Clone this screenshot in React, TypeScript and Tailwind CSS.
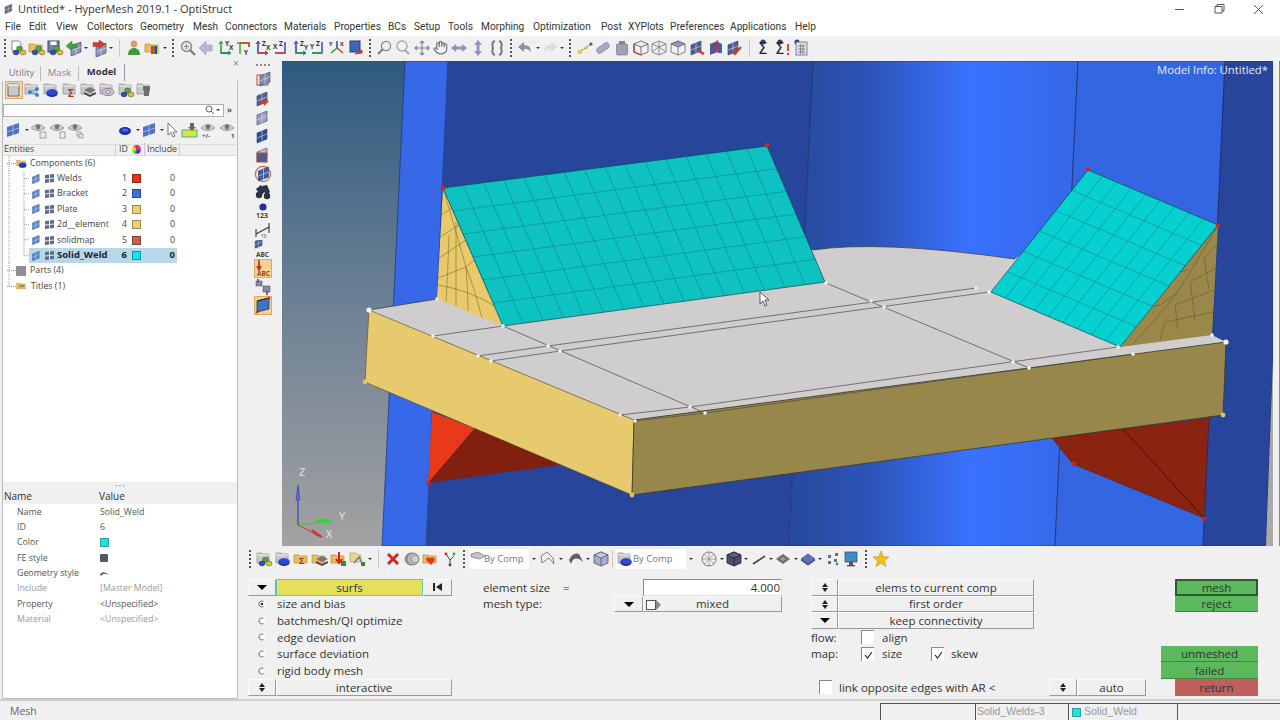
import type { ReactNode } from 'react';
import { Hand } from 'lucide-react';

const cl = (
  <g stroke="#333" strokeWidth=".4">
    <ellipse cx="10.5" cy="9.5" rx="3" ry="2.4" fill="#4caf3c" />
    <ellipse cx="7" cy="13.5" rx="3" ry="2.4" fill="#2c4fc0" />
    <ellipse cx="14" cy="13.5" rx="3" ry="2.4" fill="#e0c030" />
  </g>
);

const mesh = (fill = '#3f69b8') => (
  <g>
    <path d="M3 6 L13 2 V12 L3 16Z" fill={fill} stroke="#2b3f70" strokeWidth=".6" />
    <path d="M8 4V14M3 11 L13 7" stroke="#dfe6f2" strokeWidth=".6" />
  </g>
);

const folder = (
  <g>
    <path d="M2 3h5l1 1h6v9H2z" fill="#c9c9c9" stroke="#8c8c8c" strokeWidth=".7" />
    <path d="M2 5h12" stroke="#eee" />
  </g>
);

const yfold = <path d="M1 5h5l1 1h7v7H1z" fill="#ecbc62" stroke="#b98a3a" strokeWidth=".7" />;

const disk = (c: string) => (
  <g>
    <ellipse cx="10" cy="13" rx="5.5" ry="3" fill="#1c2f9a" />
    <ellipse cx="10" cy="11.5" rx="5.5" ry="3" fill={c} stroke="#1c2f9a" strokeWidth=".5" />
  </g>
);

const eye = (
  <g>
    <path d="M1 7 Q8 0 15 7 Q8 12 1 7Z" fill="#d2d2d2" stroke="#777" strokeWidth=".7" />
    <circle cx="8" cy="6" r="2.4" fill="#777" />
  </g>
);

const ax = (v: string, h: string, a: string, b: string) => (
  <g>
    <path d="M5 3V14H14" fill="none" stroke={v} strokeWidth="1.6" />
    <path d="M5 14H14" stroke={h} strokeWidth="1.6" />
    <path d="M3 5 L5 2 L7 5M12 12 L15 14 L12 16" fill="none" stroke={v} strokeWidth="1" />
    <text x="9" y="7" fontSize="6.5" fontWeight="700" fill="#333">{a}</text>
    <text x="13" y="11" fontSize="6.5" fontWeight="700" fill="#333">{b}</text>
  </g>
);

const boxic = (top: string, side: string, line = '#666') => (
  <g stroke={line} strokeWidth=".8">
    <path d="M9 2 L16 5 V13 L9 16 L2 13 V5Z" fill={side} />
    <path d="M2 5 L9 8 L16 5 L9 2Z" fill={top} />
    <path d="M9 8V16" />
  </g>
);

const sigma = (
  <text x="3" y="15" fontSize="15" fontFamily="DejaVu Sans, sans-serif" fill="#222">Σ</text>
);

const art: Record<string, ReactNode> = {
  imp: <g><path d="M3 2h7l2 2v8H3z" fill="#fff" stroke="#8a8a8a" />{cl}</g>,
  open: <g>{yfold}{cl}</g>,
  save: <g><rect x="2" y="2" width="11" height="11" fill="#6f86a8" stroke="#445" /><rect x="4.5" y="2.5" width="6" height="3.5" fill="#fff" />{cl}</g>,
  meshin: <g><g transform="translate(3 1)">{mesh('#8b95b5')}</g><path d="M1 7 L7 2 V5 H12 V9 H7 V12Z" fill="#3fa535" stroke="#2b7a25" strokeWidth=".4" /></g>,
  meshout: <g><g transform="translate(3 2)">{mesh('#8b95b5')}</g><path d="M15 5 L9 1 V3.5 H3 V7.5 H9 V10Z" fill="#d63a26" stroke="#9b2415" strokeWidth=".4" /></g>,
  person: <g><circle cx="9" cy="5" r="3.4" fill="#d8a070" /><path d="M3 16c0-5 3-7 6-7s6 2 6 7z" fill="#3f9a3f" /></g>,
  folderc: <g>{yfold}<rect x="7" y="7" width="2" height="8" fill="#d33" /><rect x="9" y="7" width="2" height="8" fill="#3a3" /><rect x="11" y="7" width="2" height="8" fill="#33c" /><rect x="13" y="7" width="2" height="8" fill="#ec3" /></g>,
  zoomf: <g><circle cx="7.5" cy="7.5" r="5" fill="#e6e6e6" stroke="#8a8a8a" strokeWidth="1.4" /><path d="M11 11 L16 16" stroke="#777" strokeWidth="2.2" /><path d="M5 7.5h5M7.5 5v5" stroke="#777" strokeWidth=".8" /></g>,
  left: <path d="M2 9 L9 2 V6 H15 V12 H9 V16Z" fill="#b9b7dd" stroke="#9a98c4" strokeWidth=".6" />,
  ax1: ax('#35a035', '#1c7f7f', 'Y', 'X'),
  ax2: <g><path d="M5 4V15M2 4H14V8" fill="none" stroke="#35a035" strokeWidth="1.4" /><path d="M5 4H14V8" fill="none" stroke="#d8402c" strokeWidth="1.4" /><text x="9" y="16" fontSize="6.5" fontWeight="700" fill="#333">Y</text></g>,
  ax3: ax('#2c4fc0', '#d8402c', 'Z', 'X'),
  ax4: <g><path d="M3 14H13V3" fill="none" stroke="#2c4fc0" strokeWidth="1.5" /><path d="M3 14H13" stroke="#d8402c" strokeWidth="1.5" /><text x="1" y="10" fontSize="6.5" fontWeight="700" fill="#333">X</text><text x="7" y="7" fontSize="6.5" fontWeight="700" fill="#333">Z</text></g>,
  ax5: ax('#2c4fc0', '#35a035', 'Z', 'Y'),
  ax6: <g><path d="M3 14H13V3" fill="none" stroke="#2c4fc0" strokeWidth="1.5" /><path d="M3 14H13" stroke="#35a035" strokeWidth="1.5" /><text x="1" y="10" fontSize="6.5" fontWeight="700" fill="#333">Y</text><text x="7" y="7" fontSize="6.5" fontWeight="700" fill="#333">Z</text></g>,
  axiso: <g><path d="M9 9V2" stroke="#2c4fc0" strokeWidth="1.6" /><path d="M9 9 L3 14" stroke="#35a035" strokeWidth="1.6" /><path d="M9 9 L15 14" stroke="#d8402c" strokeWidth="1.6" /><text x="1" y="7" fontSize="5.5" fontWeight="700" fill="#333">Y</text><text x="12" y="7" fontSize="5.5" fontWeight="700" fill="#333">X</text></g>,
  view: <g><rect x="3" y="2" width="10" height="11" fill="#3f69b8" stroke="#2b3f70" /><path d="M8 15 L15 11 V14Z" fill="#d63a26" stroke="#d63a26" /></g>,
  zoomp: <g><circle cx="10" cy="7" r="4.6" fill="#eee" stroke="#8a8a8a" strokeWidth="1.3" /><path d="M7 10 L2 15" stroke="#777" strokeWidth="2" /></g>,
  zoomq: <g><circle cx="8" cy="7" r="5" fill="#f2f2f2" stroke="#a6a6a6" strokeWidth="1.3" /><path d="M11 11 L15 15" stroke="#aaa" strokeWidth="2" /></g>,
  pan: <path d="M9 2V16M2 9H16M7 4 L9 2 L11 4M7 14 L9 16 L11 14M4 7 L2 9 L4 11M14 7 L16 9 L14 11" fill="none" stroke="#7c7f96" strokeWidth="1.1" />,
  lr: <path d="M1 9 L6 5 V7.5 H12 V5 L17 9 L12 13 V10.5 H6 V13Z" fill="#9593c0" />,
  ud: <path d="M9 1 L13 6 H10.5 V12 H13 L9 17 L5 12 H7.5 V6 H5Z" fill="#9593c0" />,
  brace: <path d="M7 2 Q3 3 5 9 Q3 15 7 16M11 2 Q15 3 13 9 Q15 15 11 16" fill="none" stroke="#6f7396" strokeWidth="2" />,
  undo: <path d="M2 8 L8 3 V6 Q15 6 15 13 Q12 9 8 10 V13Z" fill="#8a8fae" />,
  redo: <path d="M16 8 L10 3 V6 Q3 6 3 13 Q6 9 10 10 V13Z" fill="#dcdcdc" />,
  line: <g><path d="M3 13 L15 5" stroke="#444" strokeWidth="1" strokeDasharray="2 1" /><circle cx="4" cy="13" r="2.2" fill="#d8d23c" /><circle cx="10" cy="9" r="1.6" fill="#d8d23c" /><circle cx="15" cy="5" r="1.6" fill="#556" /></g>,
  cyl: <g transform="rotate(-35 9 9)"><rect x="2" y="6" width="14" height="6" rx="2.5" fill="#a3a8c4" stroke="#7e83a3" strokeWidth=".6" /></g>,
  weight: <g><rect x="6" y="2" width="6" height="3" fill="#888" /><rect x="3.5" y="5" width="11" height="11" rx="1" fill="#9da2b2" stroke="#6e7282" strokeWidth=".6" /></g>,
  boxr: <g fill="none" strokeWidth=".9"><path d="M9 2 L16 5 V13 L9 16 L2 13 V5Z" stroke="#666" /><path d="M2 5 L9 8 L16 5M9 8V16" stroke="#666" /><path d="M2 5V13 L9 16" stroke="#c8302a" strokeWidth="1.2" /></g>,
  boxo: <g fill="none" stroke="#777" strokeWidth=".8"><path d="M9 2 L16 5 V13 L9 16 L2 13 V5Z" /><path d="M2 5 L9 8 L16 5M9 8V16M2 13 L9 8 L16 13M9 2V8" /></g>,
  boxf: <g>{boxic('#8d98c8', '#f2f2f2')}</g>,
  mred: <g>{mesh('#4a5c8a')}<path d="M9 11 L16 15" stroke="#d63a26" strokeWidth="2.4" /></g>,
  mblue: <g><path d="M3 5 L8 3 V14 L3 16Z" fill="#4a5c8a" /><path d="M8 3 L11 1 V13 L8 14Z" fill="#c26" /><path d="M11 3 L15 5 V14 L11 14Z" fill="#4a5c8a" /></g>,
  mcheck: <g>{mesh('#4a5c8a')}<path d="M7 12 L10 15 L16 8" fill="none" stroke="#d63a26" strokeWidth="2.2" /></g>,
  sum: <g><circle cx="8" cy="3" r="2.6" fill="#26458f" />{sigma}</g>,
  sumx: <g><circle cx="6" cy="3" r="2.6" fill="#26458f" /><text x="1" y="15" fontSize="15" fontFamily="DejaVu Sans, sans-serif" fill="#222">Σ</text><path d="M14 5V12M14 14V16" stroke="#d63a26" strokeWidth="1.8" /></g>,
  calc: <g><circle cx="5" cy="3" r="2.6" fill="#26458f" /><rect x="4" y="3" width="11" height="13" fill="#dde2e8" stroke="#667" strokeWidth=".8" /><path d="M6 7H13M6 10H13M6 13H13M8.5 5V15M11 5V15" stroke="#667" strokeWidth=".7" /></g>,
  fsel: <g><path d="M3 3H14V15H3Z" fill="#c8c8c8" stroke="#6c6c6c" /><path d="M3 3H14V5H3Z" fill="#e4e4e4" /></g>,
  fnet: <g>{folder}<g fill="#2e7fd0" stroke="#2e7fd0" strokeWidth=".7"><circle cx="7" cy="11" r="1.6" /><circle cx="14" cy="8" r="1.6" /><circle cx="14" cy="14" r="1.6" /><path d="M7 11 L14 8M7 11 L14 14" /></g></g>,
  fdisk: <g>{folder}{disk('#2e49d8')}</g>,
  fsig: <g>{folder}<text x="7" y="16" fontSize="10" fontWeight="700" fill="#a8332a">Σ</text></g>,
  fstk: <g>{folder}<path d="M5 9 L11 6 L17 9 L11 12Z" fill="#777" /><path d="M5 11 L11 14 L17 11 V13 L11 16 L5 13Z" fill="#444" /></g>,
  fring: <g>{folder}<ellipse cx="10" cy="11" rx="6" ry="3.6" fill="#d8c8d8" stroke="#8d7c9a" /><ellipse cx="10" cy="11" rx="2.6" ry="1.4" fill="#f0f0f0" stroke="#8d7c9a" /></g>,
  fcub: <g>{folder}{cl}</g>,
  fbolt: <g>{folder}<path d="M8 5H15V9L14 10V15H9V10L8 9Z" fill="#6d6d6d" /></g>,
  mdrop: <g><path d="M2 6 L8 4 V14 L2 16Z" fill="#4f72c2" /><path d="M8 4 L14 2 V12 L8 14Z" fill="#4f72c2" /><path d="M2 11 L14 7M8 4V14" stroke="#cdd8ee" strokeWidth=".6" /></g>,
  eye1: <g>{eye}<rect x="10" y="11" width="6" height="6" fill="#e6e6e6" stroke="#777" strokeWidth=".6" /></g>,
  eye2: <g>{eye}<path d="M11 11H16V17H11Z" fill="none" stroke="#777" strokeWidth=".7" /></g>,
  eye3: <g>{eye}<rect x="10" y="11" width="4" height="4" fill="none" stroke="#777" strokeWidth=".6" /><rect x="12" y="13" width="4" height="4" fill="#e6e6e6" stroke="#777" strokeWidth=".6" /></g>,
  ydisk: <g><ellipse cx="9" cy="10" rx="6" ry="4" fill="#1b2db0" /><ellipse cx="9" cy="9" rx="3" ry="1.6" fill="#4e6cf0" /></g>,
  curs: <path d="M5 2V14L8 11.5 L10 16 L12 15 L10 11 H14Z" fill="#fff" stroke="#555" strokeWidth=".8" />,
  ybox: <g><rect x="1" y="9" width="15" height="7" fill="#e6e234" stroke="#36b5ae" /><path d="M9 2H13V6H15 L11 10 L7 6H9Z" fill="#6b6b3b" /></g>,
  eyep: <g>{eye}<text x="2" y="17" fontSize="6" fontWeight="700" fill="#444">+/-</text></g>,
  eye1n: <g>{eye}<text x="12" y="17" fontSize="6" fontWeight="700" fill="#444">1</text></g>,
  vbox: <g><rect x="3" y="4" width="11" height="10" fill="#f4e8e0" stroke="#c2463a" /><g transform="translate(3 -1)">{mesh('#7f8bb0')}</g></g>,
  vred: <g>{mesh('#4f5f8a')}<path d="M15 11 L10 9 V11 H6 V14 H10 V16Z" fill="#d63a26" /></g>,
  vgh: <g>{mesh('#98a0ba')}</g>,
  vmesh: <g>{mesh('#2f4a8f')}</g>,
  vdbl: <g>{mesh('#b8b8c8')}<rect x="3" y="7" width="10" height="9" fill="#4a5c8a" stroke="#c2463a" /></g>,
  vring: <g><circle cx="9" cy="9" r="7.6" fill="#f2e8e6" stroke="#c06a60" strokeWidth="1.2" /><g transform="translate(1.5 0)">{mesh('#3f5f9e')}</g></g>,
  bino: <g fill="#2c3040"><path d="M2 6 L7 2 L11 8 L7 13Z" /><path d="M8 3 L13 2 L16 9 L12 13Z" /><circle cx="5" cy="12" r="3.2" /><circle cx="13" cy="13" r="3.2" /></g>,
  n123: <g><circle cx="9" cy="5" r="3.6" fill="#1e2f9e" /><text x="2" y="16" fontSize="7" fontWeight="700" fill="#444">123</text></g>,
  angle: <g><path d="M2 13 L15 6M2 8V16M15 2V12" stroke="#333" strokeWidth="1.1" fill="none" /><text x="7" y="17" fontSize="5" fill="#333">10</text></g>,
  vabc: <g><g transform="translate(-1 -3) scale(.7)">{mesh('#3f5f9e')}</g><text x="2" y="17" fontSize="6.5" fontWeight="700" fill="#444">ABC</text></g>,
  redabc: <g><path d="M5 1V9M3 7 L5 11 L7 7" stroke="#c5281c" strokeWidth="1.6" fill="none" /><text x="3" y="17" fontSize="6.5" fontWeight="700" fill="#8a4a2a">ABC</text></g>,
  vlink: <g><rect x="2" y="3" width="6" height="5" fill="#7f8bb0" stroke="#445" strokeWidth=".5" /><rect x="9" y="8" width="7" height="6" fill="#7f8bb0" stroke="#445" strokeWidth=".5" /><path d="M4 1V4M13 13V17" stroke="#c5281c" strokeWidth="1.6" /></g>,
  vsel: <g><path d="M3 5 L15 2 V13 L3 16Z" fill="#3f74c8" stroke="#222" strokeWidth=".7" /><path d="M3 5 L15 2" stroke="#222" /><circle cx="3" cy="16" r="1.3" fill="#b33" /><circle cx="15" cy="2" r="1.3" fill="#b33" /></g>,
  b1: <g>{folder}{cl}</g>,
  b3: <g>{folder}{disk('#2e49d8')}</g>,
  b4: <g>{yfold}<text x="6" y="14" fontSize="9" fontWeight="700" fill="#a8332a">Σ</text></g>,
  b5: <g>{yfold}<path d="M5 9 L11 6 L17 9 L11 12Z" fill="#777" /><path d="M5 11 L11 14 L17 11 V13 L11 16 L5 13Z" fill="#444" /></g>,
  b6: <g>{yfold}<path d="M9 2V11M6 9 L9 13 L12 9" stroke="#d0261a" strokeWidth="2" fill="none" /><rect x="11" y="11" width="5" height="5" fill="#2f8f2f" /></g>,
  b7: <g><path d="M1 3H7L9 5H12V12H1Z" fill="#ecd48a" stroke="#b98a3a" strokeWidth=".6" /><path d="M5 13 L10 7 L14 15" stroke="#5b79c0" strokeWidth="1.3" fill="none" /><rect x="12" y="12" width="4" height="4" fill="#2f8f2f" /></g>,
  del: <path d="M3 5 L5 3 L9 7 L13 3 L15 5 L11 9 L15 13 L13 15 L9 11 L5 15 L3 13 L7 9Z" fill="#d8201c" />,
  coil: <g fill="#9c9c9c" stroke="#666" strokeWidth=".6"><circle cx="8" cy="9" r="6" /><circle cx="10" cy="9" r="6" fill="#b8b8b8" /><circle cx="12" cy="9" r="4" fill="#cfcfcf" /></g>,
  heart: <g>{yfold}<path d="M9 15 L4 10 Q4 6 8 8 Q12 6 13 10Z" fill="#e03a20" /></g>,
  ys: <g><path d="M9 16V10M9 10 L5 4M9 10 L13 6" stroke="#444" strokeWidth="1" fill="none" /><circle cx="5" cy="4" r="1.4" fill="#d0261a" /><circle cx="13" cy="4" r="1.4" fill="#3a3" /><circle cx="9" cy="15" r="1.4" fill="#444" /></g>,
  c1: <g><path d="M2 4 L9 2 L16 6 L11 9 L2 7Z" fill="#bfc4d4" stroke="#666" strokeWidth=".6" /></g>,
  cu: <path d="M3 13 L2 6 L8 2 L14 8 L15 14 L10 8Z" fill="none" stroke="#77809a" strokeWidth="1" />,
  cs: <path d="M2 10 Q6 2 12 4 L16 12 L12 9 Q6 7 4 14Z" fill="#5a6078" />,
  cb: <g>{boxic('#c2c8e8', '#a7aec9', '#556')}</g>,
  wire: <g><circle cx="9" cy="9" r="7" fill="none" stroke="#777" /><path d="M2 9H16M9 2V16M4 4 L14 14M14 4 L4 14" stroke="#888" strokeWidth=".7" /></g>,
  sb: <g>{boxic('#58628f', '#474f78', '#222')}</g>,
  ln: <path d="M3 14 L15 6" stroke="#444" strokeWidth="1.6" />,
  dia: <g><path d="M2 9 L9 4 L16 9 L9 14Z" fill="#6d6d6d" /><path d="M6 9 L9 7 L12 9 L9 11Z" fill="#a0a0a0" /></g>,
  dib: <g><path d="M2 9 L9 4 L16 9 L9 14Z" fill="#5a72c4" stroke="#2c3a78" strokeWidth=".7" /><path d="M2 10 L9 15 L16 10" fill="none" stroke="#223" strokeWidth="1" /></g>,
  dots4: <g fill="#5e6e96"><rect x="4" y="5" width="3" height="3" /><rect x="11" y="3" width="3" height="3" /><rect x="4" y="11" width="3" height="3" /><rect x="10" y="9" width="3" height="3" /><circle cx="13" cy="14" r="1.4" fill="#3a3" /></g>,
  mon: <g><rect x="3" y="2" width="12" height="10" fill="#3d8ec8" stroke="#345" strokeWidth=".7" /><rect x="7" y="12" width="4" height="3" fill="#555" /><rect x="5" y="15" width="8" height="1.4" fill="#555" /></g>,
  star: <path d="M9 1 L11.3 6.6 L17 7 L12.6 10.7 L14 16.5 L9 13.4 L4 16.5 L5.4 10.7 L1 7 L6.7 6.6Z" fill="#f0c020" stroke="#b48a10" strokeWidth=".5" />,
};

const Ic = ({ k }: { k: string }) => (
  <svg width="18" height="18" viewBox="0 0 18 18" className="shrink-0">{art[k]}</svg>
);

const Cell = ({ k }: { k: string }) => (
  <div className="flex w-[18.7px] shrink-0 items-center justify-center"><Ic k={k} /></div>
);

const Dots = () => (
  <div className="flex w-[10px] shrink-0 justify-center">
    <div className="h-[18px] w-0 border-l-2 border-dotted border-[#555]" />
  </div>
);
const Sep = ({ w = 'w-[11px]' }: { w?: string }) => (
  <div className={`flex shrink-0 justify-center ${w}`}><div className="h-[18px] w-px bg-[#c8c8c8]" /></div>
);
const Drop = ({ w = 'w-[6px]' }: { w?: string }) => (
  <div className={`flex shrink-0 justify-center ${w}`}>
    <div className="h-0 w-0 border-x-[2px] border-t-[2px] border-x-transparent border-t-[#333]" />
  </div>
);

const Bar = ({ items }: { items: string[] }) => (
  <>
    {items.map((k, i) =>
      k === '.' ? <Dots key={i} /> : k === '|' ? <Sep key={i} /> : k === 'v' ? <Drop key={i} /> : <Cell key={i} k={k} />
    )}
  </>
);

const menus = [
  ['File', 'w-[24px]'], ['Edit', 'w-[27px]'], ['View', 'w-[31px]'], ['Collectors', 'w-[53px]'],
  ['Geometry', 'w-[53px]'], ['Mesh', 'w-[32px]'], ['Connectors', 'w-[59px]'], ['Materials', 'w-[50px]'],
  ['Properties', 'w-[54px]'], ['BCs', 'w-[26px]'], ['Setup', 'w-[34px]'], ['Tools', 'w-[33px]'],
  ['Morphing', 'w-[52px]'], ['Optimization', 'w-[68px]'], ['Post', 'w-[27px]'], ['XYPlots', 'w-[42px]'],
  ['Preferences', 'w-[60px]'], ['Applications', 'w-[65px]'], ['Help', 'w-[30px]'],
];

const comps = [
  ['Welds', '1', 'bg-[#e0351f]'], ['Bracket', '2', 'bg-[#3a70e0]'], ['Plate', '3', 'bg-[#ecd078]'],
  ['2d__element', '4', 'bg-[#ecd078]'], ['solidmap', '5', 'bg-[#c2654a]'], ['Solid_Weld', '6', 'bg-[#10e8e8]'],
];

const props: [string, ReactNode, boolean][] = [
  ['Name', 'Solid_Weld', false],
  ['ID', '6', false],
  ['Color', <div className="h-[9px] w-[9px] border border-[#3a9a9a] bg-[#10e8e8]" />, false],
  ['FE style', <div className="h-[8px] w-[8px] rounded-[1px] bg-[#55585f]" />, false],
  ['Geometry style', <svg width="10" height="6" viewBox="0 0 10 6"><path d="M0 3 Q4 -1 9 4 L6 3 Q3 2 1 5Z" fill="#555" /></svg>, false],
  ['Include', '[Master Model]', true],
  ['Property', '<Unspecified>', false],
  ['Material', '<Unspecified>', true],
];

const TreeLine = ({ y0, y1, x }: { y0: number; y1: number; x: number }) => (
  <path d={`M${x} ${y0}V${y1}`} stroke="#999" strokeDasharray="1 1" />
);

const Tree = () => (
  <div className="flex h-[326px] shrink-0 flex-col bg-white text-[#444]">
    <div className="flex h-[15.4px] items-center">
      <svg width="13" height="15" viewBox="0 0 13 15" className="shrink-0">
        <TreeLine x={6} y0={0} y1={15} />
        <path d="M4 7.5H13" stroke="#999" strokeDasharray="1 1" />
      </svg>
      <svg width="12" height="12" viewBox="0 0 18 18" className="shrink-0">{yfold}{disk('#2040c8')}</svg>
      <span className="ml-[2px]">Components (6)</span>
    </div>
    {comps.map(([name, id, color], i) => (
      <div key={name} className="flex h-[15.4px] items-center">
        <svg width="26" height="15.4" viewBox="0 0 26 15.4" className="shrink-0">
          <TreeLine x={6} y0={0} y1={15.4} />
          <TreeLine x={21} y0={0} y1={i === 5 ? 8 : 15.4} />
          <path d="M21 7.7H26" stroke="#999" strokeDasharray="1 1" />
        </svg>
        <div className={`flex h-[15.4px] w-[148px] items-center ${i === 5 ? 'bg-[#b6d8ea] text-[9.5px] font-bold text-[#222]' : ''}`}>
          <svg width="13" height="12" viewBox="0 0 18 18" className="ml-[1px] shrink-0">{mesh('#5a86cc')}</svg>
          <svg width="11" height="11" viewBox="0 0 11 11" className="ml-[1px] shrink-0">
            <path d="M1 2 L10 1 V9 L1 10Z" fill="#5e6a88" /><path d="M5.5 1V10M1 6 L10 5" stroke="#e8ecf4" />
          </svg>
          <span className="ml-[2px] w-[62px] shrink-0 whitespace-nowrap">{name}</span>
          <span className="w-[8px] shrink-0 text-right">{id}</span>
          <div className={`ml-[5px] h-[9px] w-[9px] shrink-0 border border-[#00000055] ${color}`} />
          <span className="ml-[28px] w-[6px] shrink-0 text-right">0</span>
        </div>
      </div>
    ))}
    <div className="flex h-[15.4px] items-center">
      <svg width="13" height="15" viewBox="0 0 13 15" className="shrink-0">
        <TreeLine x={6} y0={0} y1={15} />
        <path d="M4 7.5H13" stroke="#999" strokeDasharray="1 1" />
      </svg>
      <div className="h-[10px] w-[10px] shrink-0 bg-[#8f8f8f]" />
      <span className="ml-[4px]">Parts (4)</span>
    </div>
    <div className="flex h-[15.4px] items-center">
      <svg width="13" height="15" viewBox="0 0 13 15" className="shrink-0">
        <TreeLine x={6} y0={0} y1={8} />
        <path d="M4 7.5H13" stroke="#999" strokeDasharray="1 1" />
      </svg>
      <svg width="12" height="12" viewBox="0 0 18 18" className="shrink-0">{yfold}<path d="M5 8H12M5 10H12" stroke="#666" /></svg>
      <span className="ml-[3px]">Titles (1)</span>
    </div>
  </div>
);

const LeftPanel = () => (
  <div className="flex h-full w-[240px] shrink-0 flex-col text-[8.8px] font-['Open_Sans',sans-serif]">
    <div className="flex h-[3px] justify-end pr-[1px]">
      <span className="text-[10px] leading-[4px] text-[#888]">×</span>
    </div>
    <div className="flex h-[16.5px] items-end pl-[3px] text-[9.5px]">
      <div className="flex h-[15px] w-[38px] items-center justify-center border-r border-[#bbb] text-[#777]">Utility</div>
      <div className="flex h-[15px] w-[38px] items-center justify-center border-r border-[#bbb] text-[#888]">Mask</div>
      <div className="flex h-[16.5px] w-[46px] items-center justify-center border-r border-[#999] font-bold text-[#333]">Model</div>
    </div>
    <div className="mx-[2px] flex flex-1 flex-col border-x border-b border-[#bdbdbd]">
      <div className="flex h-[19px] items-center pl-[2px]">
        <div className="flex h-[18px] w-[18px] shrink-0 items-center justify-center border border-[#d8a860] bg-[#f8d8a8]"><Ic k="fsel" /></div>
        <Bar items={['fnet', 'fdisk', 'fsig', 'fstk', 'fring', 'fcub', 'fbolt']} />
      </div>
      <div className="flex h-[21px] items-center">
        <div className="flex h-[13px] w-[221px] items-center justify-end border border-[#b0b0b0] bg-white pr-[2px]">
          <svg width="10" height="10" viewBox="0 0 10 10"><circle cx="4" cy="4" r="3" fill="none" stroke="#666" /><path d="M6 6 L9 9" stroke="#666" /></svg>
          <Drop />
        </div>
        <span className="ml-[3px] text-[8px] font-bold text-[#555]">»</span>
      </div>
      <div className="flex h-[19px] items-center pl-[2px]">
        <Cell k="mdrop" /><Drop />
        <Cell k="eye1" /><Cell k="eye2" /><Cell k="eye3" />
        <div className="w-[42px]" />
        <Cell k="ydisk" /><Drop />
        <Cell k="mdrop" /><Drop />
        <div className="-ml-[3px]" />
        <Cell k="curs" /><Cell k="ybox" /><Cell k="eyep" /><Cell k="eye1n" />
      </div>
      <div className="mt-[4px] flex h-[12px] items-center border-y border-[#dcdcdc] text-[#444]">
        <span className="w-[112px] pl-[1px]">Entities</span>
        <span className="w-[17px] border-l border-[#ccc] pl-[3px]">ID</span>
        <div className="h-[9px] w-[9px] rounded-full bg-[conic-gradient(#e22,#e2e,#22e,#2e2,#ee2,#e22)]" />
        <span className="ml-[3px] border-x border-[#ccc] px-[2px]">Include</span>
      </div>
      <Tree />
      <div className="flex h-[8px] items-center justify-center text-[6px] leading-none text-[#888]">• • •</div>
      <div className="flex h-[14px] items-center bg-[#f0f0f0] text-[10px] text-[#333]">
        <span className="w-[96px] pl-[1px]">Name</span><span>Value</span>
      </div>
      <div className="flex flex-1 flex-col bg-white pt-[1px]">
        {props.map(([k, v, dim]) => (
          <div key={k} className={`flex h-[15.35px] items-center ${dim ? 'text-[#999]' : 'text-[#555]'}`}>
            <span className="w-[97px] pl-[14px]">{k}</span>
            <span className="flex items-center">{v}</span>
          </div>
        ))}
      </div>
    </div>
  </div>
);

const vtools = ['vbox', 'vred', 'vgh', 'vmesh', 'vdbl', 'vring', 'bino', 'n123', 'angle', 'vabc'];

const VToolbar = () => (
  <div className="flex w-[36px] shrink-0 flex-col items-center pt-[3px] pr-[1px]">
    <div className="mb-[5px] h-0 w-[14px] border-t-2 border-dotted border-[#888]" />
    {vtools.map((k) => <div key={k} className="flex h-[18.7px] items-center"><Ic k={k} /></div>)}
    <div className="mt-[1px] flex h-[19px] w-[18px] items-center justify-center border border-[#d8a860] bg-[#f8d090]"><Ic k="redabc" /></div>
    <div className="flex h-[18px] items-center"><Ic k="vlink" /></div>
    <div className="flex h-[19px] w-[18px] items-center justify-center border border-[#d8a860] bg-[#f8d090]"><Ic k="vsel" /></div>
  </div>
);

type P = [number, number];
const lerp = (a: P, b: P, t: number): P => [a[0] + (b[0] - a[0]) * t, a[1] + (b[1] - a[1]) * t];

// grid lines of a meshed quad, corners in order a b c d
const quadGrid = (a: P, b: P, c: P, d: P, nu: number, nv: number) => {
  let out = '';
  for (let i = 1; i < nu; i++) {
    const p = lerp(a, b, i / nu);
    const q = lerp(d, c, i / nu);
    out += `M${p[0]} ${p[1]}L${q[0]} ${q[1]}`;
  }
  for (let j = 1; j < nv; j++) {
    const p = lerp(a, d, j / nv);
    const q = lerp(b, c, j / nv);
    out += `M${p[0]} ${p[1]}L${q[0]} ${q[1]}`;
  }
  return out;
};

const whites: P[] = [
  [437, 299], [433, 336], [503, 326], [478, 356], [491, 361], [548, 346], [560, 351], [620, 415], [635, 421],
  [690, 407], [705, 413], [826, 283], [871, 301], [884, 307], [976, 288], [989, 292], [1013, 362], [1029, 368],
  [1118, 347], [1133, 354], [1212, 335],
];

const Scene = () => (
  <svg viewBox="282 61 991 485" className="block h-full w-full">
    <defs>
      <linearGradient id="bg" x1="0" y1="0" x2="0" y2="1">
        <stop offset="0" stopColor="#2e5a80" />
        <stop offset="0.5" stopColor="#6d8194" />
        <stop offset="1" stopColor="#a2a2a2" />
      </linearGradient>
      <linearGradient id="cyl" gradientUnits="userSpaceOnUse" x1="800" y1="0" x2="1080" y2="0">
        <stop offset="0" stopColor="#284aa0" />
        <stop offset="0.25" stopColor="#2c54b8" />
        <stop offset="0.6" stopColor="#3a72ff" />
        <stop offset="1" stopColor="#3568e6" />
      </linearGradient>
    </defs>
    <rect x="282" y="61" width="991" height="485" fill="url(#bg)" />
    <polygon points="405,61 448,61 426,546 382,546" fill="#3668e8" stroke="#1a2a5c" strokeWidth=".6" />
    <polygon points="448,61 813,61 789,546 426,546" fill="#27459a" />
    <polygon points="813,61 1078,61 1055,546 789,546" fill="url(#cyl)" stroke="#1a2a5c" strokeWidth=".6" />
    <polygon points="1078,61 1225,61 1203,546 1055,546" fill="#3566e2" stroke="#1a2a5c" strokeWidth=".6" />
    <polygon points="1225,61 1273,61 1273,360 1266,546 1203,546" fill="#27459a" stroke="#1a2a5c" strokeWidth=".6" />
    <polygon points="1273,360 1273,546 1266,546" fill="#a9a9a9" />

    <polygon points="432,412 475,428 428,483" fill="#e83a1a" />
    <polygon points="475,428 428,483 560,465 600,440" fill="#82200f" />
    <polygon points="1052,438 1073,464 1204,518 1209,418" fill="#8a2410" stroke="#5a1408" strokeWidth=".5" />
    <path d="M1122 428L1204 518" stroke="#3a0c04" strokeWidth=".8" />

    <path d="M369 310L437 299L767 250L813 250Q880 240 1015 259L1100 200L1212 335L1226 342L634 420Z" fill="#cfcdcd" />
    <path d="M369 310L437 299M813 250Q880 240 1015 259" fill="none" stroke="#333" strokeWidth=".7" />
    <polygon points="369,310 634,420 632,495 365,382" fill="#e7ca6d" stroke="#4a3f1c" strokeWidth=".5" />
    <polygon points="634,420 1226,342 1223,415 632,495" fill="#98874a" stroke="#3a3216" strokeWidth=".7" />

    <path
      d="M433 336L503 326M503 326L705 413M826 283L1029 368M478 356L548 346L976 288M491 361L560 351L989 292M620 415L690 407L1118 347M635 421L705 413L1133 354"
      fill="none" stroke="#4a4a4a" strokeWidth=".7"
    />

    <polygon points="443,188 503,326 437,299" fill="#e8ca6c" />
    <path
      d="M443 188Q456 232 466 267Q476 292 482 318M441 215L452 208M440 237L459 225M439 258L466 240M438 278L466 267L478 257M438 285Q470 290 498 308M446 302Q448 270 449 235M456 306Q456 280 456 222M468 311Q468 290 466 267"
      fill="none" stroke="#6a5a26" strokeWidth=".5"
    />
    <polygon points="443,188 767,146 825,282 503,326" fill="#0dc2c0" stroke="#0a4a4a" strokeWidth=".7" />
    <path d={quadGrid([443, 188], [767, 146], [825, 282], [503, 326], 16, 6)} fill="none" stroke="#0a7a7e" strokeWidth=".5" />

    <polygon points="1218,225 1120,347 1212,335 1214,300" fill="#9a884a" />
    <path
      d="M1218 225Q1195 265 1177 293Q1160 315 1132 345M1217 245L1204 258L1209 290M1216 268L1190 282L1195 320M1214 290L1175 305L1178 330M1213 312L1165 322L1160 340M1177 293L1160 305L1140 308M1187 270L1170 275"
      fill="none" stroke="#5f5228" strokeWidth=".5"
    />
    <polygon points="1088,170 1218,225 1120,347 991,292" fill="#06d0d0" stroke="#0a4a4a" strokeWidth=".7" />
    <path d={quadGrid([1088, 170], [1218, 225], [1120, 347], [991, 292], 9, 6)} fill="none" stroke="#0a7a7e" strokeWidth=".5" />

    {whites.map(([x, y]) => <circle key={`${x}-${y}`} cx={x} cy={y} r="1.8" fill="#f2f2f2" />)}
    <circle cx="369" cy="310" r="2.6" fill="#f2f2f2" />
    <circle cx="1226" cy="342" r="2.6" fill="#f2f2f2" />
    <circle cx="365" cy="382" r="2.4" fill="#e2c060" />
    <circle cx="632" cy="495" r="2.4" fill="#e2c060" />
    <circle cx="1223" cy="415" r="2.4" fill="#e2c060" />
    {([[443, 188], [767, 145], [1088, 169], [1218, 225], [429, 483], [1074, 464], [1204, 519]] as P[]).map(([x, y]) => (
      <circle key={`${x}-${y}`} cx={x} cy={y} r="2.3" fill="#c8281c" />
    ))}

    <path d="M298 525V488" stroke="#2d2db8" strokeWidth="1" />
    <path d="M296 500L298 485L300 500Z" fill="#5a68d8" stroke="#2d2db8" strokeWidth=".5" />
    <path d="M298 525L322 522" stroke="#3cc83c" strokeWidth="1" />
    <ellipse cx="324" cy="521" rx="8" ry="2.2" fill="#3ccf3c" />
    <path d="M298 525L322 537" stroke="#c83c3c" strokeWidth="1" />
    <path d="M312 530L322 537L315 534Z" fill="#d83c3c" stroke="#c83c3c" strokeWidth="2" />
    <g fontSize="11" fill="#e4e4e4" fontFamily="Open Sans, sans-serif">
      <text x="299" y="476">Z</text>
      <text x="339" y="520">Y</text>
      <text x="326" y="538">X</text>
    </g>
    <path d="M760 292v12l3-3 2 5 2-1-2-5h4z" fill="#fff" stroke="#333" strokeWidth=".8" />
  </svg>
);

const btn = 'flex items-center justify-center border border-t-[#fafafa] border-l-[#fafafa] border-r-[#9a9a9a] border-b-[#9a9a9a] bg-[#f0f0f0]';

const DownBtn = ({ w }: { w: string }) => (
  <div className={`${btn} shrink-0 ${w}`}>
    <div className="h-0 w-0 border-x-[5px] border-t-[5px] border-x-transparent border-t-black" />
  </div>
);
const UpDownBtn = ({ w }: { w: string }) => (
  <div className={`${btn} shrink-0 flex-col gap-[1px] ${w}`}>
    <div className="h-0 w-0 border-x-[3.5px] border-b-[4px] border-x-transparent border-b-[#222]" />
    <div className="h-0 w-0 border-x-[3.5px] border-t-[4px] border-x-transparent border-t-[#222]" />
  </div>
);

const Radio = ({ on = false }: { on?: boolean }) => (
  <svg width="8" height="8" viewBox="0 0 8 8" className="shrink-0">
    <path d="M5.5 1.5A3 3 0 1 0 5.5 6.5" fill="none" stroke="#555" strokeWidth=".8" />
    <circle cx="5" cy="4" r="2.2" fill="#fff" />
    {on && <circle cx="4" cy="4" r="1.3" fill="#333" />}
  </svg>
);

const Check = ({ on = false }: { on?: boolean }) => (
  <div className="flex h-[14px] w-[13px] shrink-0 items-center justify-center border-t border-l border-[#888] bg-white">
    {on && (
      <svg width="9" height="8" viewBox="0 0 9 8"><path d="M1 4L3.5 7L8 1" fill="none" stroke="#222" strokeWidth="1.1" /></svg>
    )}
  </div>
);

const rowH = 'h-[16.7px]';

const MeshPanel = () => (
  <div className="flex h-[127px] pl-[3px] pt-[7px] text-[11.5px] font-['Open_Sans',sans-serif] text-[#333]">
    <div className="flex w-[204px] shrink-0 flex-col">
      <div className={`flex ${rowH}`}>
        <DownBtn w="w-[28px]" />
        <div className="flex w-[147px] shrink-0 items-center justify-center border border-[#5cc8c0] bg-[#e4e05c]">surfs</div>
        <div className={`${btn} w-[29px] shrink-0 gap-[1px]`}>
          <div className="h-[8px] w-[2px] bg-[#222]" />
          <div className="h-0 w-0 border-y-[4px] border-r-[6px] border-y-transparent border-r-[#222]" />
        </div>
      </div>
      {['size and bias', 'batchmesh/QI optimize', 'edge deviation', 'surface deviation', 'rigid body mesh'].map((t, i) => (
        <div key={t} className={`flex items-center ${rowH}`}>
          <div className="ml-[10px] mr-[11px] flex"><Radio on={i === 0} /></div>
          {t}
        </div>
      ))}
      <div className={`flex ${rowH}`}>
        <UpDownBtn w="w-[28px]" />
        <div className={`${btn} flex-1`}>interactive</div>
      </div>
    </div>

    <div className="ml-[31px] flex w-[299px] shrink-0 flex-col">
      <div className={`flex items-center ${rowH}`}>
        <span className="w-[80px]">element size</span>
        <span className="w-[80px]">=</span>
        <div className="flex h-full w-[139px] items-center justify-end border-t border-l border-t-[#888] border-l-[#888] border-b border-r border-b-[#ddd] border-r-[#ddd] bg-white pr-[1px]">4.000</div>
      </div>
      <div className={`flex items-center ${rowH}`}>
        <span className="w-[131px]">mesh type:</span>
        <div className="flex h-full w-[168px]">
          <DownBtn w="w-[29px]" />
          <div className={`${btn} relative flex-1`}>
            <div className="absolute left-[2px] top-[3px] h-[10px] w-[10px] border border-[#555] bg-white" />
            <div className="absolute left-[12px] top-[3px] h-0 w-0 border-y-[5px] border-l-[5px] border-y-transparent border-l-[#888]" />
            mixed
          </div>
        </div>
      </div>
    </div>

    <div className="ml-[29px] flex w-[335px] shrink-0 flex-col">
      {['elems to current comp', 'first order', 'keep connectivity'].map((t, i) => (
        <div key={t} className={`flex w-[223px] ${rowH}`}>
          {i === 2 ? <DownBtn w="w-[27px]" /> : <UpDownBtn w="w-[27px]" />}
          <div className={`${btn} flex-1`}>{t}</div>
        </div>
      ))}
      <div className={`flex items-center ${rowH}`}>
        <span className="w-[50px]">flow:</span><Check /><span className="ml-[8px]">align</span>
      </div>
      <div className={`flex items-center ${rowH}`}>
        <span className="w-[50px]">map:</span><Check on /><span className="ml-[8px] w-[49px]">size</span><Check on /><span className="ml-[7px]">skew</span>
      </div>
      <div className={rowH} />
      <div className={`flex items-center ${rowH}`}>
        <div className="ml-[8px]"><Check /></div>
        <span className="ml-[7px] w-[210px]">link opposite edges with AR &lt;</span>
        <div className="flex h-full">
          <UpDownBtn w="w-[28px]" />
          <div className={`${btn} w-[69px]`}>auto</div>
        </div>
      </div>
    </div>

    <div className="ml-[15px] flex w-[97px] shrink-0 flex-col items-end">
      <div className={`flex w-[83px] items-center justify-center border-2 border-[#2c5a32] bg-[#5cb85c] ${rowH}`}>mesh</div>
      <div className={`flex w-[83px] items-center justify-center border-b border-[#3a8a40] bg-[#5cb85c] ${rowH}`}>reject</div>
      <div className="h-[33.4px]" />
      <div className={`flex w-full items-center justify-center border-b border-[#3a8a40] bg-[#5cb85c] ${rowH}`}>unmeshed</div>
      <div className={`flex w-full items-center justify-center border-b border-[#3a8a40] bg-[#5cb85c] ${rowH}`}>failed</div>
      <div className={`flex w-[83px] items-center justify-center bg-[#c0605c] ${rowH}`}>return</div>
    </div>
  </div>
);

const statusBox = 'flex h-full shrink-0 items-center border-t border-l border-[#555] pl-[1px]';

export default function App() {
  return (
    <div className="flex h-[720px] w-[1280px] flex-col overflow-hidden bg-[#f0f0f0] font-['Open_Sans',sans-serif]">
      {/* title bar */}
      <div className="flex h-[18px] shrink-0 items-center bg-white pl-[3px] text-[11px] text-[#333]">
        <svg width="12" height="12" viewBox="0 0 18 18" className="mr-[3px] shrink-0">{mesh('#6a6f80')}</svg>
        <span className="flex-1">Untitled* - HyperMesh 2019.1 - OptiStruct</span>
        <svg width="100" height="12" viewBox="0 0 100 12" className="mr-[11px] shrink-0" stroke="#555" fill="none">
          <path d="M15 6.5H24M55 3.5H62V10H55ZM57 3.5V1.5H64V8H62M94 2L103 11M103 2L94 11" transform="translate(-9 0)" />
        </svg>
      </div>
      {/* menu */}
      <div className="flex h-[18px] shrink-0 items-center bg-white pl-[5px] font-['Roboto',sans-serif] text-[10.2px] text-[#333]">
        {menus.map(([m, w]) => <span key={m} className={`shrink-0 whitespace-nowrap ${w}`}>{m}</span>)}
      </div>
      {/* main toolbar */}
      <div className="flex h-[25px] shrink-0 items-center pb-[2px]">
        <Dots />
        <div className="-ml-[1.5px]" />
        <Bar items={['imp', 'open', 'save', 'meshin', 'v', 'meshout', 'v', '|', 'person', 'folderc', 'v', '.', 'zoomf', 'left', 'ax1', 'ax2', 'ax3', 'ax4', 'ax5', 'ax6', 'axiso', 'view', '.', 'zoomp', 'zoomq', 'pan']} />
        <div className="flex w-[18.7px] shrink-0 justify-center"><Hand size={15} color="#777" /></div>
        <Bar items={['lr', 'ud', 'brace', '.', 'undo', 'v', 'redo', 'v', '.', 'line', 'cyl', 'weight', 'boxr', 'boxo', 'boxf', 'mred', 'mblue', 'mcheck', '|', 'sum', 'sumx', 'calc']} />
      </div>

      <div className="flex min-h-0 flex-1">
        <LeftPanel />
        <div className="flex min-w-0 flex-1 flex-col pl-[5px]">
          <div className="flex h-[485px] shrink-0">
            <VToolbar />
            <div className="relative ml-[1px] w-[991px] shrink-0">
              <Scene />
              <span className="absolute right-[5px] top-[1px] text-[11.3px] text-[#e8eaf2]">Model Info: Untitled*</span>
            </div>
            <div className="flex-1 border-r border-[#888]" />
          </div>
          {/* bottom toolbar */}
          <div className="flex h-[26px] shrink-0 items-center text-[9.5px] text-[#777]">
            <Bar items={['.', 'b1', 'b3', 'b4', 'b5', 'b6', 'b7', 'v', '|', 'del', 'coil', 'heart', 'ys', '.']} />
            <div className="flex h-[20px] w-[60px] shrink-0 items-center bg-white">
              <Ic k="c1" />
              <span className="-ml-[3px] whitespace-nowrap">By Comp</span>
            </div>
            <Drop w="w-[10px]" />
            <Bar items={['cu', 'v']} />
            <div className="w-[3px]" />
            <Bar items={['cs', 'v', 'cb']} />
            <Sep w="w-[6px]" />
            <div className="flex h-[20px] w-[70px] shrink-0 items-center bg-white">
              <Ic k="fdisk" />
              <span className="-ml-[1px] whitespace-nowrap">By Comp</span>
            </div>
            <Drop w="w-[10px]" />
            <div className="w-[4px]" />
            <Bar items={['wire', 'v', 'sb', 'v', 'ln', 'v', 'dia', 'v', 'dib', 'v', 'dots4', 'mon', '.']} />
            <div className="w-[1px]" />
            <Bar items={['star']} />
          </div>
          <MeshPanel />
        </div>
      </div>

      {/* status bar */}
      <div className="flex h-[21px] shrink-0 items-end justify-between border-t-2 border-[#cfcfcf] text-[10.5px]">
        <span className="pl-[10px] text-[#666]">Mesh</span>
        <div className="flex h-[17px] font-['Liberation_Sans',sans-serif] text-[#999]">
          <div className={`${statusBox} w-[95px]`} />
          <div className={`${statusBox} w-[93px]`}>Solid_Welds-3</div>
          <div className={`${statusBox} w-[109px] gap-[3px] pl-[3px]`}>
            <div className="h-[9px] w-[9px] border border-[#3a9a9a] bg-[#10e8e8]" />Solid_Weld
          </div>
          <div className={`${statusBox} w-[103px]`} />
        </div>
      </div>
    </div>
  );
}
